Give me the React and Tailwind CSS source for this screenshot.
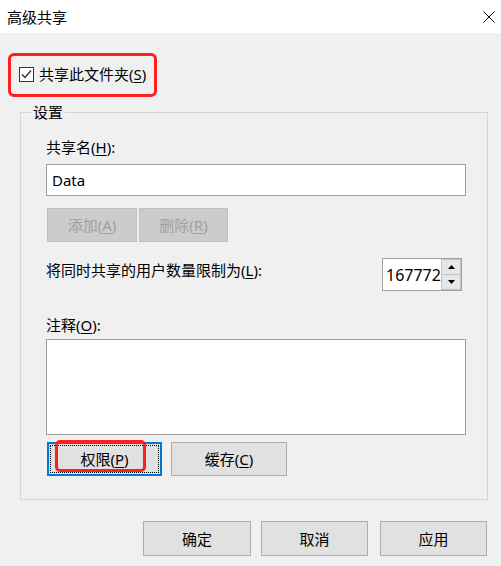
import React from "react";

const U = ({ c }) => <span className="underline underline-offset-[2px] decoration-[1px]">{c}</span>;

function Btn({ children, className = "" }) {
  return (
    <div className={`h-[34px] flex items-center justify-center bg-[#e1e1e1] border border-[#adadad] text-black text-[15px] leading-[20px] ${className}`}>
      {children}
    </div>
  );
}

function DisabledBtn({ children, className = "" }) {
  return (
    <div className={`h-[34px] flex items-center justify-center bg-[#cccccc] border border-[#bfbfbf] text-[#a0a0a0] text-[15px] leading-[20px] ${className}`}>
      {children}
    </div>
  );
}

export default function App() {
  return (
    <div
      className="relative w-[501px] h-[566px] bg-[#f0f0f0] text-black overflow-hidden"
      style={{ fontFamily: '"Segoe UI", "Noto Sans", "Noto Sans CJK SC", sans-serif' }}
    >
      {/* Title bar */}
      <div className="h-[33px] bg-white flex items-center justify-between pl-[7px] pr-[6px]">
        <span className="text-[15px] leading-[20px]">高级共享</span>
        <svg width="12" height="12" viewBox="0 0 12 12">
          <path d="M0.5 0.5 L11.5 11.5 M11.5 0.5 L0.5 11.5" stroke="#000" strokeWidth="1" fill="none" />
        </svg>
      </div>

      {/* Checkbox row */}
      <div className="mt-[31px] ml-[19px] h-[20px] flex items-center">
        <div className="w-[15px] h-[15px] border border-[#333333] bg-white flex items-center justify-center">
          <svg width="13" height="13" viewBox="0 0 13 13">
            <path d="M2 6.5 L5 9.5 L11 2.5" stroke="#333" strokeWidth="1.4" fill="none" />
          </svg>
        </div>
        <span className="ml-[5px] text-[15px] leading-[20px]">
          共享此文件夹(<U c="S" />)
        </span>
      </div>

      {/* Group box */}
      <div className="relative mt-[28px] ml-[20px] w-[468px] border border-[#d5d5d5] pl-[25px] pr-[21px] pt-[24px] pb-[23px]">
        <span className="absolute left-[10px] top-[-11px] px-[2px] bg-[#f0f0f0] text-[15px] leading-[20px]">设置</span>

        <div className="text-[15px] leading-[20px]">
          共享名(<U c="H" />):
        </div>
        <div className="mt-[7px] h-[32px] bg-white border border-[#9e9e9e] flex items-center pl-[5px] text-[15px]">
          Data
        </div>

        <div className="mt-[12px] flex">
          <DisabledBtn className="ml-[1px] w-[90px]">
            添加(<U c="A" />)
          </DisabledBtn>
          <DisabledBtn className="ml-[2px] w-[89px]">
            删除(<U c="R" />)
          </DisabledBtn>
        </div>

        <div className="mt-[16px] flex items-start justify-between">
          <div className="mt-[2px] text-[15px] leading-[20px]">
            将同时共享的用户数量限制为(<U c="L" />):
          </div>
          <div className="mr-[4px] w-[80px] h-[33px] flex border border-[#a0a0a0] bg-white">
            <div className="flex-1 flex items-center pl-[3px] text-[16px] overflow-hidden whitespace-nowrap">167772</div>
            <div className="w-[20px] flex flex-col">
              <div className="flex-1 flex items-center justify-center bg-[#e6e6e6] border border-[#c4c4c4]">
                <svg width="7" height="4" viewBox="0 0 7 4"><path d="M0 4 L3.5 0 L7 4 Z" fill="#000" /></svg>
              </div>
              <div className="flex-1 flex items-center justify-center bg-[#e6e6e6] border border-t-0 border-[#c4c4c4]">
                <svg width="7" height="4" viewBox="0 0 7 4"><path d="M0 0 L7 0 L3.5 4 Z" fill="#000" /></svg>
              </div>
            </div>
          </div>
        </div>

        <div className="mt-[24px] text-[15px] leading-[20px]">
          注释(<U c="O" />):
        </div>
        <div className="mt-[4px] h-[96px] bg-white border border-[#9e9e9e]"></div>

        <div className="mt-[7px] flex">
          <div className="ml-[1px] w-[115px] h-[34px] flex items-center justify-center bg-[#e1e1e1] border-2 border-[#0078d7] outline-1 outline-dotted outline-black -outline-offset-4 text-[15px] leading-[20px]">
            权限(<U c="P" />)
          </div>
          <Btn className="ml-[9px] w-[116px]">
            缓存(<U c="C" />)
          </Btn>
        </div>
      </div>

      {/* Bottom buttons */}
      <div className="mt-[21px] flex">
        <Btn className="ml-[143px] w-[108px] h-[35px]">确定</Btn>
        <Btn className="ml-[10px] w-[107px] h-[35px]">取消</Btn>
        <Btn className="ml-[12px] w-[107px] h-[35px]">应用</Btn>
      </div>

      {/* Red annotation boxes */}
      <div className="absolute left-[8px] top-[53px] w-[149px] h-[44px] border-[3px] border-[#ff1f1f] rounded-[6px]"></div>
      <div className="absolute left-[55px] top-[440px] w-[91px] h-[32px] border-[3px] border-[#ff1f1f] rounded-[5px]"></div>
    </div>
  );
}
